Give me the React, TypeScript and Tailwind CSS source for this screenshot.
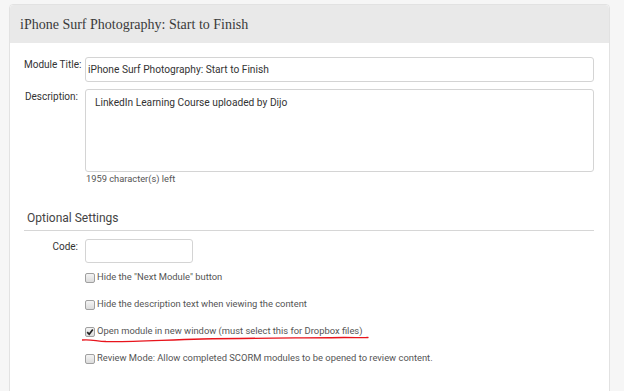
import React from "react";

const OPCIONES = [
  { label: 'Hide the "Next Module" button', checked: false },
  { label: "Hide the description text when viewing the content", checked: false },
  { label: "Open module in new window (must select this for Dropbox files)", checked: true, marked: true },
  { label: "Review Mode: Allow completed SCORM modules to be opened to review content.", checked: false },
];

function Check({ checked }: { checked: boolean }) {
  return (
    <span className="w-[10px] h-[10px] shrink-0 rounded-[2px] border border-[#a0a0a0] bg-gradient-to-b from-[#f4f4f4] to-[#dcdcdc] flex items-center justify-center">
      {checked && (
        <svg width="8" height="8" viewBox="0 0 8 8">
          <path d="M1.2 4.2 L3.2 6.3 L6.8 1.4" fill="none" stroke="#222" strokeWidth="1.7" />
        </svg>
      )}
    </span>
  );
}

export default function App() {
  return (
    <div className="w-[624px] h-[391px] overflow-hidden bg-[#f6f6f6] pt-[4px] pl-[9px] pr-[14px]" style={{ fontFamily: "Roboto, 'Liberation Sans', sans-serif" }}>
      <div className="bg-white border border-[#e2e2e2] rounded-t-[4px] h-[420px]">
        {/* Cabecera */}
        <div className="h-[38px] bg-[#e9e9e9] flex items-center px-[10px] rounded-t-[4px]">
          <h1 className="text-[14px] text-[#3a3a3a]" style={{ fontFamily: "'Liberation Serif', serif" }}>
            iPhone Surf Photography: Start to Finish
          </h1>
        </div>

        <div className="pl-[14px] pr-[15px] pt-[14px]">
          {/* Título */}
          <div className="flex gap-[7px]">
            <label className="w-[54px] text-right text-[10px] text-[#333] whitespace-nowrap">Module Title:</label>
            <div className="flex-1 h-[25px] border border-[#d4d4d4] rounded-[3px] flex items-center px-[2px] text-[10.2px] text-[#333]">
              iPhone Surf Photography: Start to Finish
            </div>
          </div>

          {/* Descripción */}
          <div className="flex gap-[7px] mt-[7px]">
            <label className="w-[54px] text-right text-[10px] text-[#333] whitespace-nowrap">Description:</label>
            <div className="flex-1">
              <div className="h-[83px] border border-[#d4d4d4] rounded-[3px] px-[9px] pt-[5px] text-[10.2px] text-[#333]">
                LinkedIn Learning Course uploaded by Dijo
              </div>
              <p className="text-[9.3px] leading-[13px] text-[#555] pl-[1px]">1959 character(s) left</p>
            </div>
          </div>

          {/* Opcionales */}
          <div className="mt-[25px] border-b border-[#d6d6d6] pb-[4px] pl-[3px]">
            <h2 className="text-[12px] leading-[16px] text-[#444]">Optional Settings</h2>
          </div>

          <div className="flex gap-[7px] mt-[8px]">
            <label className="w-[54px] text-right text-[10px] text-[#333]">Code:</label>
            <div className="w-[108px] h-[24px] border border-[#d4d4d4] rounded-[3px]" />
          </div>

          <div className="ml-[61px] mt-[8px] flex flex-col gap-[14px]">
            {OPCIONES.map((o) => (
              <div key={o.label} className="relative flex items-center gap-[2px] h-[13px]">
                <Check checked={o.checked} />
                <span className="text-[9.4px] text-[#555] whitespace-nowrap">{o.label}</span>
                {o.marked && (
                  <svg className="absolute left-[-3px] top-[10px]" width="290" height="10" viewBox="0 0 290 10">
                    <path
                      d="M0 5 C 8 4, 14 6, 24 6.5 C 50 7, 80 5, 120 4 C 170 3, 230 3, 262 2.5 C 275 2.5, 280 3, 286 2.5"
                      fill="none"
                      stroke="#e8141c"
                      strokeWidth="1.3"
                      strokeLinecap="round"
                    />
                  </svg>
                )}
              </div>
            ))}
          </div>
        </div>
      </div>
    </div>
  );
}
